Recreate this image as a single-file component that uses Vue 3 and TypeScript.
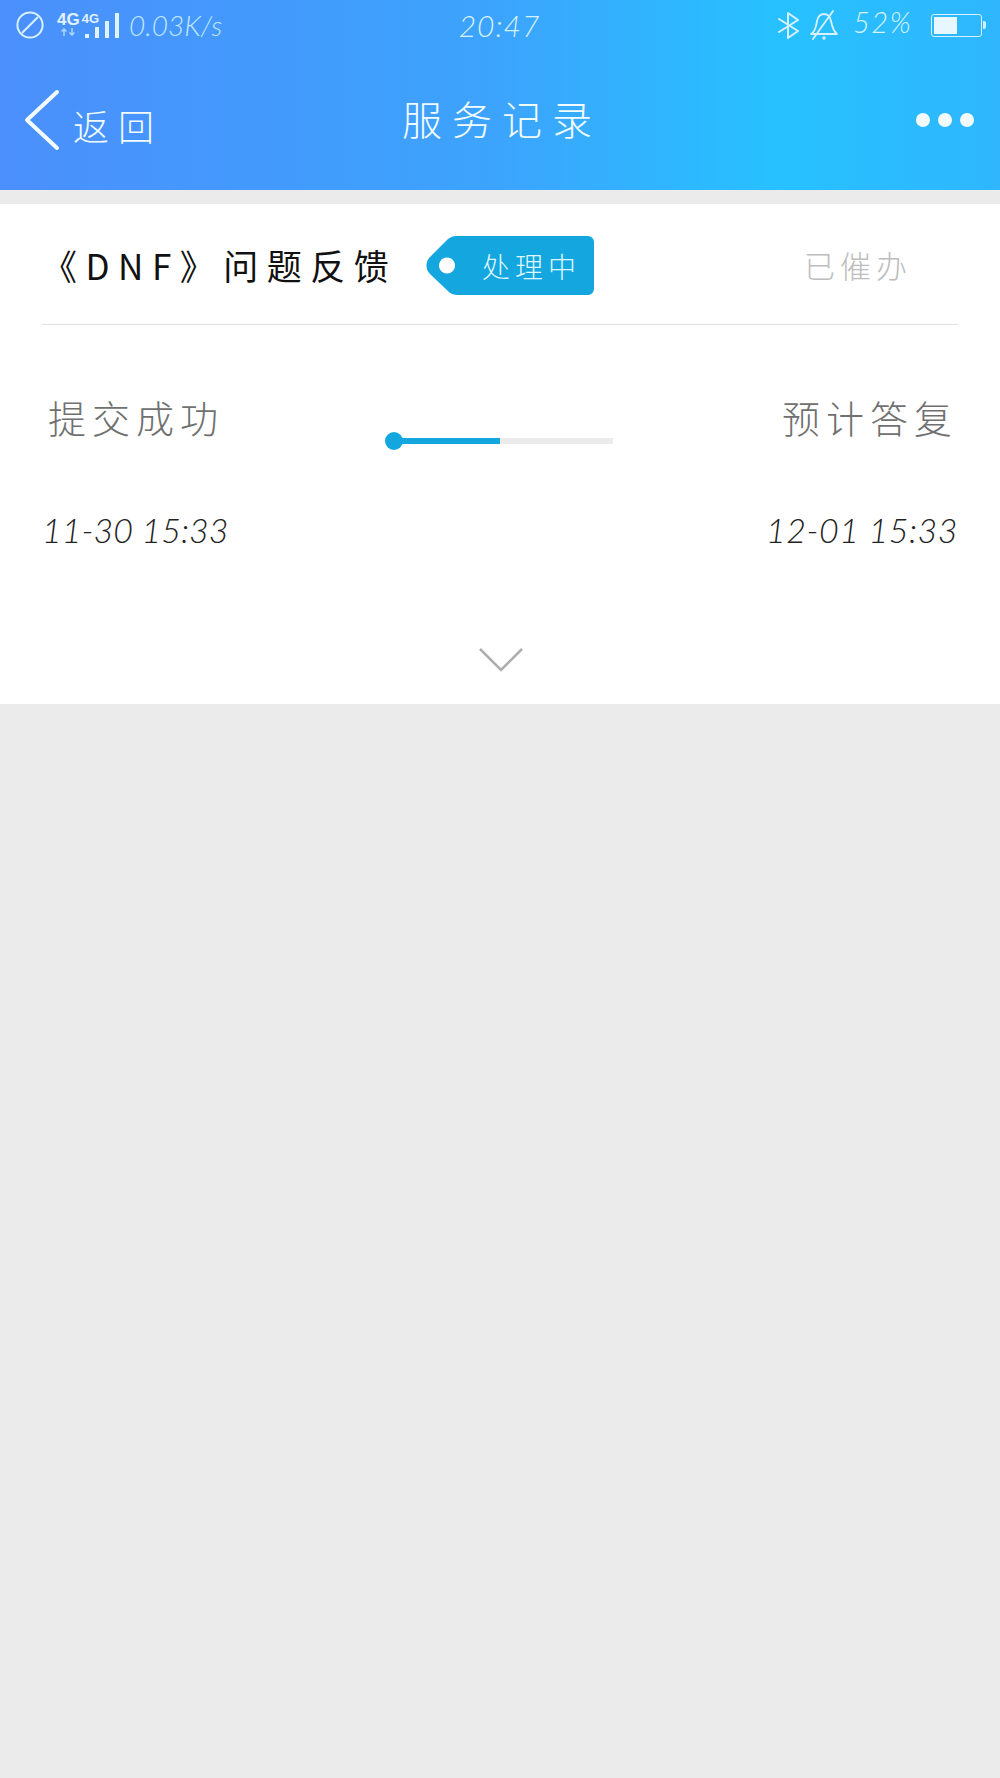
<script setup lang="ts">
const signalBars: number[] = [4, 11, 17, 25]
</script>

<template>
  <div class="page">
    <header class="head">
      <div class="status">
        <div class="status-left">
          <svg class="ban" width="28" height="28" viewBox="0 0 28 28" fill="none" stroke="#d8f1ff" stroke-width="2">
            <circle cx="14" cy="14" r="12.6" />
            <path d="M6 22L22 6" />
          </svg>
          <div class="nets">
            <div class="net">
              <b class="net-big">4G</b>
              <svg width="18" height="8" viewBox="0 0 18 8" fill="none" stroke="#a9d3fb" stroke-width="1.6">
                <path d="M5 8V1M2.5 3.5L5 1l2.5 2.5M13 0v7M10.5 4.5L13 7l2.5-2.5" />
              </svg>
            </div>
            <b class="net-small">4G</b>
          </div>
          <div class="bars">
            <i v-for="(h, idx) in signalBars" :key="idx" class="bar" :style="{ height: h + 'px' }"></i>
          </div>
          <span class="speed">0.03K/s</span>
        </div>
        <span class="clock">20:47</span>
        <div class="status-right">
          <svg width="24" height="28" viewBox="0 0 24 28" fill="none" stroke="#d8f1ff" stroke-width="2" stroke-linejoin="round" stroke-linecap="round">
            <path d="M2 8L21 20L11 27V2L21 9L2 21" />
          </svg>
          <svg class="bell" width="30" height="30" viewBox="0 0 30 30" fill="none" stroke="#d8f1ff" stroke-width="1.8" stroke-linecap="round" stroke-linejoin="round">
            <path d="M2 24C7 21 7 16 8 11C9 6 12 4 15 4C18 4 21 6 22 11C23 16 24 21 28 24Z" />
            <path d="M4 29L24 1" />
            <circle cx="15" cy="28" r="0.8" />
          </svg>
          <span class="pct">52%</span>
          <div class="battery">
            <div class="battery-body"><div class="battery-fill"></div></div>
            <div class="battery-tip"></div>
          </div>
        </div>
      </div>
      <nav class="nav">
        <div class="back">
          <svg width="38" height="62" viewBox="0 0 38 62" fill="none" stroke="#f2fbff" stroke-width="4" stroke-linecap="round" stroke-linejoin="round">
            <path d="M34 3L4 31L34 59" />
          </svg>
          <span class="back-text">返回</span>
        </div>
        <h1 class="title">服务记录</h1>
        <div class="dots"><i></i><i></i><i></i></div>
      </nav>
    </header>

    <section class="card">
      <div class="top">
        <span class="name">《DNF》问题反馈</span>
        <span class="tag">
          <svg class="tag-bg" width="168" height="59" viewBox="0 0 168 59">
            <path fill="#14a6de" fill-rule="evenodd" d="M30 0H162a6 6 0 0 1 6 6V53a6 6 0 0 1-6 6H32c-4 0-7-1-9-3L4 38a12 12 0 0 1 0-17L22 3c3-2 5-3 8-3ZM21 21.5a8 8 0 1 0 .01 0Z" />
          </svg>
          <span class="tag-text">处理中</span>
        </span>
        <span class="urged">已催办</span>
      </div>

      <div class="progress">
        <div class="side">
          <div class="label">提交成功</div>
          <div class="date">11-30 15:33</div>
        </div>
        <div class="track"><div class="track-fill"></div></div>
        <div class="side side-right">
          <div class="label">预计答复</div>
          <div class="date">12-01 15:33</div>
        </div>
      </div>

      <div class="more">
        <svg width="46" height="26" viewBox="0 0 46 26" fill="none" stroke="#aeaeae" stroke-width="2.6">
          <path d="M2 2L23 23L44 2" />
        </svg>
      </div>
    </section>
  </div>
</template>

<style scoped>
.page {
  min-height: 1778px;
  background: #ebebeb;
  font-family: "Noto Sans CJK SC", "Noto Sans", sans-serif;
  font-weight: 300;
  overflow: hidden;
}
.head {
  height: 190px;
  background: linear-gradient(90deg, #4b8ffc 0%, #3ca4fc 50%, #27c1ff 78%, #2fb6fd 100%);
  color: #f2fbff;
}
.status {
  height: 50px;
  padding: 0 14px 0 16px;
  display: grid;
  grid-template-columns: 1fr auto 1fr;
  align-items: center;
  color: #d8f2ff;
}
.status-left, .status-right {
  display: flex;
  align-items: center;
}
.status-right {
  justify-content: flex-end;
}
.ban { margin-right: 13px; }
.nets {
  display: flex;
  align-items: flex-start;
  height: 26px;
  color: #e0f2ff;
}
.net {
  display: flex;
  flex-direction: column;
  align-items: center;
}
.net-big {
  font: 700 17px/15px "Liberation Sans", sans-serif;
}
.net-small {
  font: 700 13px/13px "Liberation Sans", sans-serif;
  margin-left: 2px;
}
.net svg { display: block; margin-top: 1px; }
.bars {
  display: flex;
  align-items: flex-end;
  gap: 6px;
  height: 26px;
  margin-left: -14px;
}
.bar {
  width: 4px;
  background: #e0f4ff;
  display: block;
}
.speed {
  margin-left: 10px;
  font: 300 italic 28px/28px Lato, "Liberation Sans", sans-serif;
  color: #bfe8ff;
}
.clock {
  font: 300 italic 30px/30px Lato, "Liberation Sans", sans-serif;
  color: #d8f2ff;
  letter-spacing: 1px;
  margin-left: -3px;
}
.bell { margin-left: 8px; }
.pct {
  margin-left: 14px;
  width: 66px;
  font: 300 italic 29px/28px Lato, "Liberation Sans", sans-serif;
  letter-spacing: 1.5px;
  margin-top: -6px;
  white-space: nowrap;
}
.battery {
  margin-left: 12px;
  display: flex;
  align-items: center;
}
.battery-body {
  width: 51px;
  height: 23px;
  border: 1.5px solid #d8f1ff;
  border-radius: 3px;
  padding: 2px;
  box-sizing: border-box;
}
.battery-fill {
  width: 52%;
  height: 100%;
  background: #e6f7ff;
}
.battery-tip {
  width: 3px;
  height: 8px;
  background: #cfeeff;
  margin-left: 1px;
  border-radius: 0 2px 2px 0;
}
.nav {
  height: 140px;
  padding: 0 25px 0 23px;
  position: relative;
  display: flex;
  align-items: center;
  justify-content: space-between;
}
.back {
  display: flex;
  align-items: center;
}
.back-text {
  font-size: 36px;
  line-height: 44px;
  letter-spacing: 9px;
  margin: 10px 0 0 12px;
}
.title {
  margin: 0;
  position: absolute;
  left: 4px;
  right: 0;
  top: 40px;
  text-align: center;
  font-size: 40px;
  font-weight: 300;
  line-height: 56px;
  letter-spacing: 10px;
}
.dots {
  display: flex;
  gap: 8px;
  margin-right: 1px;
}
.dots i {
  width: 14px;
  height: 14px;
  border-radius: 50%;
  background: #f4fbff;
}
.card {
  margin-top: 14px;
  height: 500px;
  background: #fff;
  padding: 0 42px;
  box-sizing: border-box;
}
.top {
  height: 120px;
  border-bottom: 1px solid #e2e2e2;
  display: flex;
  align-items: center;
}
.name {
  width: 384px;
  flex: none;
  font-size: 35px;
  font-weight: 400;
  letter-spacing: 8.5px;
  color: #111;
  white-space: nowrap;
}
.tag {
  position: relative;
  width: 168px;
  height: 59px;
  flex: none;
  display: flex;
  align-items: center;
  margin-top: 3px;
}
.tag-bg {
  position: absolute;
  left: 0;
  top: 0;
}
.tag-text {
  position: relative;
  margin-left: 56px;
  font-size: 28px;
  letter-spacing: 5px;
  color: #dff6ff;
  white-space: nowrap;
}
.urged {
  margin-left: auto;
  margin-right: 46px;
  font-size: 31px;
  letter-spacing: 5px;
  color: #bdbdbd;
  white-space: nowrap;
}
.progress {
  display: flex;
  justify-content: space-between;
  align-items: flex-start;
  padding-top: 66px;
}
.side {
  width: 240px;
  flex: none;
}
.side-right { text-align: right; }
.label {
  font-size: 38px;
  line-height: 52px;
  letter-spacing: 6px;
  color: #707070;
  padding-left: 6px;
}
.side-right .label { padding-left: 0; }
.date {
  margin-top: 62px;
  font: 300 italic 34px/50px Lato, "Liberation Sans", sans-serif;
  color: #222;
  white-space: nowrap;
}
.side-right .date { letter-spacing: 0.5px; }
.track {
  width: 220px;
  height: 6px;
  background: #ebebeb;
  margin-top: 47px;
  margin-left: 6px;
  position: relative;
}
.track-fill {
  width: 48.5%;
  height: 100%;
  background: #14a6de;
}
.track-fill::before {
  content: "";
  position: absolute;
  left: -8px;
  top: -6px;
  width: 18px;
  height: 18px;
  border-radius: 50%;
  background: #14a6de;
}
.more {
  margin-top: 92px;
  display: flex;
  justify-content: center;
  padding-left: 2px;
}
</style>
